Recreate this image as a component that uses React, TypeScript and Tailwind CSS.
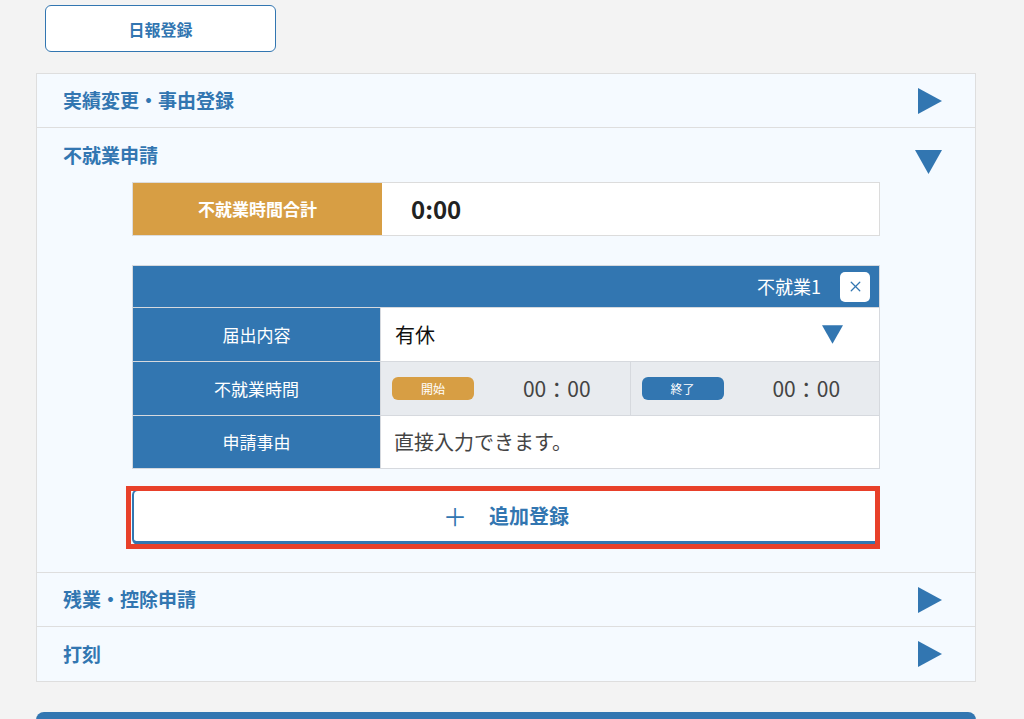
import { X } from 'lucide-react'

const FONT = { fontFamily: '"Noto Sans CJK JP", "Noto Sans", sans-serif' }

function TriangleRight() {
  return (
    <svg width="24" height="26" viewBox="0 0 24 26" className="shrink-0">
      <polygon points="0,0 24,13 0,26" fill="#3276b1" />
    </svg>
  )
}

function TriangleDown({ w = 27, h = 24 }: { w?: number; h?: number }) {
  return (
    <svg width={w} height={h} viewBox="0 0 27 24" className="shrink-0">
      <polygon points="0,0 27,0 13.5,24" fill="#3276b1" />
    </svg>
  )
}

function SectionHeader({ title, last }: { title: string; last?: boolean }) {
  return (
    <div className={`flex h-[54px] items-center justify-between pl-[26px] pr-[33px] ${last ? '' : 'border-b border-[#dedede]'}`}>
      <span className="text-[19px] font-bold text-[#3276b1]">{title}</span>
      <TriangleRight />
    </div>
  )
}

function TimeHalf({ label, color, last }: { label: string; color: string; last?: boolean }) {
  return (
    <div className={`flex flex-1 items-center pl-[11px] ${last ? '' : 'border-r border-[#d6d9de]'}`}>
      <span className={`flex h-[23px] w-[82px] items-center justify-center rounded-[6px] text-[12px] text-white ${color}`}>
        {label}
      </span>
      <span className="flex-1 pl-[10px] text-center text-[21px] text-[#444]">00：00</span>
    </div>
  )
}

export default function App() {
  return (
    <div className="min-h-screen bg-[#f3f3f3] pl-[36px] pr-[48px] pt-[5px]" style={FONT}>
      <button className="ml-[9px] flex h-[47px] w-[231px] items-center justify-center rounded-[6px] border border-[#3276b1] bg-white text-[16px] font-bold text-[#3276b1]">
        日報登録
      </button>

      <div className="mt-[21px] border border-[#dedede] bg-[#f5faff]">
        <SectionHeader title="実績変更・事由登録" />

        <div className="border-b border-[#dedede] pb-[27px]">
          <div className="flex h-[54px] items-center justify-between pl-[26px] pr-[33px]">
            <span className="text-[19px] font-bold text-[#3276b1]">不就業申請</span>
            <div className="mt-[14px]">
              <TriangleDown />
            </div>
          </div>

          <div className="px-[95px]">
            <div className="flex h-[54px] border border-[#dcdcdc] bg-white">
              <div className="flex w-[249px] items-center justify-center bg-[#d79e44] text-[17px] font-bold text-white">
                不就業時間合計
              </div>
              <div className="flex flex-1 items-center pl-[29px] text-[24px] font-bold text-[#222]">0:00</div>
            </div>

            <div className="mt-[29px] border border-[#d6d9de] bg-white">
              <div className="flex h-[41px] items-center justify-end gap-[19px] bg-[#3276b1] pr-[9px] text-[18px] text-white">
                <span>不就業1</span>
                <span className="flex h-[30px] w-[30px] items-center justify-center rounded-[5px] bg-white">
                  <X size={17} strokeWidth={1.8} color="#3276b1" />
                </span>
              </div>

              <div className="flex h-[54px] border-t border-[#d6d9de]">
                <div className="flex w-[248px] items-center justify-center border-r border-[#d6d9de] bg-[#3276b1] text-[17px] text-white">
                  届出内容
                </div>
                <div className="flex flex-1 items-center justify-between pl-[14px] pr-[36px]">
                  <span className="text-[20px] text-[#111]">有休</span>
                  <TriangleDown w={21} h={19} />
                </div>
              </div>

              <div className="flex h-[54px] border-t border-[#d6d9de]">
                <div className="flex w-[248px] items-center justify-center border-r border-[#d6d9de] bg-[#3276b1] text-[17px] text-white">
                  不就業時間
                </div>
                <div className="flex flex-1 bg-[#e8ebef]">
                  <TimeHalf label="開始" color="bg-[#d79e44]" />
                  <TimeHalf label="終了" color="bg-[#3276b1]" last />
                </div>
              </div>

              <div className="flex h-[53px] border-t border-[#d6d9de]">
                <div className="flex w-[248px] items-center justify-center border-r border-[#d6d9de] bg-[#3276b1] text-[17px] text-white">
                  申請事由
                </div>
                <div className="flex flex-1 items-center pl-[13px] text-[20px] text-[#444]">直接入力できます。</div>
              </div>
            </div>

            <div className="relative mt-[20px]">
              <button className="flex h-[56px] w-full items-center justify-center gap-[22px] rounded-[6px] border-2 border-b-4 border-[#3276b1] bg-white text-[20px] font-bold text-[#3276b1]">
                <span className="text-[24px] font-normal">＋</span>
                <span>追加登録</span>
              </button>
              <div className="pointer-events-none absolute left-[-6px] right-0 top-[-3px] bottom-[-4px] border-[5px] border-[#e8402a]" />
            </div>
          </div>
        </div>

        <SectionHeader title="残業・控除申請" />
        <SectionHeader title="打刻" last />
      </div>

      <div className="mt-[30px] h-[20px] rounded-t-[8px] bg-[#3276b1]" />
    </div>
  )
}
